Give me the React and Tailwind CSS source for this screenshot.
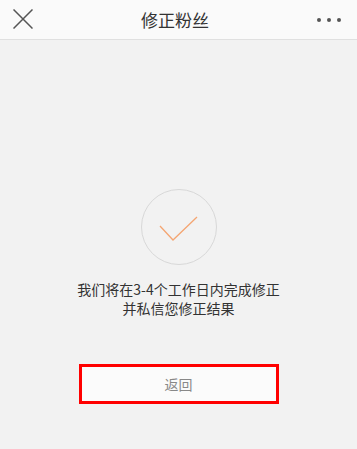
import React from "react";

const App = () => {
  return (
    <div
      className="w-[357px] h-[449px] bg-[#f2f2f2] flex flex-col overflow-hidden"
      style={{ fontFamily: '"Noto Sans CJK SC", "Noto Sans", sans-serif' }}
    >
      {/* header */}
      <div className="h-[40px] bg-[#fafafa] border-b border-[#e0e0e0] flex items-center justify-between px-[13px] shrink-0">
        <svg width="20" height="20" viewBox="0 0 20 20" className="-mt-[2px]">
          <path d="M0.5 0.5 L19.5 19.5 M19.5 0.5 L0.5 19.5" stroke="#555" strokeWidth="1.5" fill="none" />
        </svg>
        <span className="text-[17px] text-[#333] leading-none">修正粉丝</span>
        <div className="flex gap-[6px] items-center mr-[3px]">
          <span className="w-[4px] h-[4px] rounded-full bg-[#555]"></span>
          <span className="w-[4px] h-[4px] rounded-full bg-[#555]"></span>
          <span className="w-[4px] h-[4px] rounded-full bg-[#555]"></span>
        </div>
      </div>

      {/* body */}
      <div className="flex flex-col items-center pt-[149px]">
        <div className="w-[76px] h-[76px] rounded-full border border-[#d8d8d8] flex items-center justify-center">
          <svg width="40" height="26" viewBox="0 0 40 26" className="mt-[4px]">
            <path d="M1 10 L14 24 L38 1" stroke="#f5a673" strokeWidth="1.3" fill="none" />
          </svg>
        </div>
        <div className="mt-[15px] text-[14px] leading-[19px] text-[#333] text-center">
          <p>我们将在3-4个工作日内完成修正</p>
          <p>并私信您修正结果</p>
        </div>
        <button className="mt-[46px] w-[200px] h-[40px] border-[3px] border-[#ff0000] bg-[#fbfbfb] text-[14px] text-[#888] flex items-center justify-center">
          返回
        </button>
      </div>
    </div>
  );
};

export default App;
